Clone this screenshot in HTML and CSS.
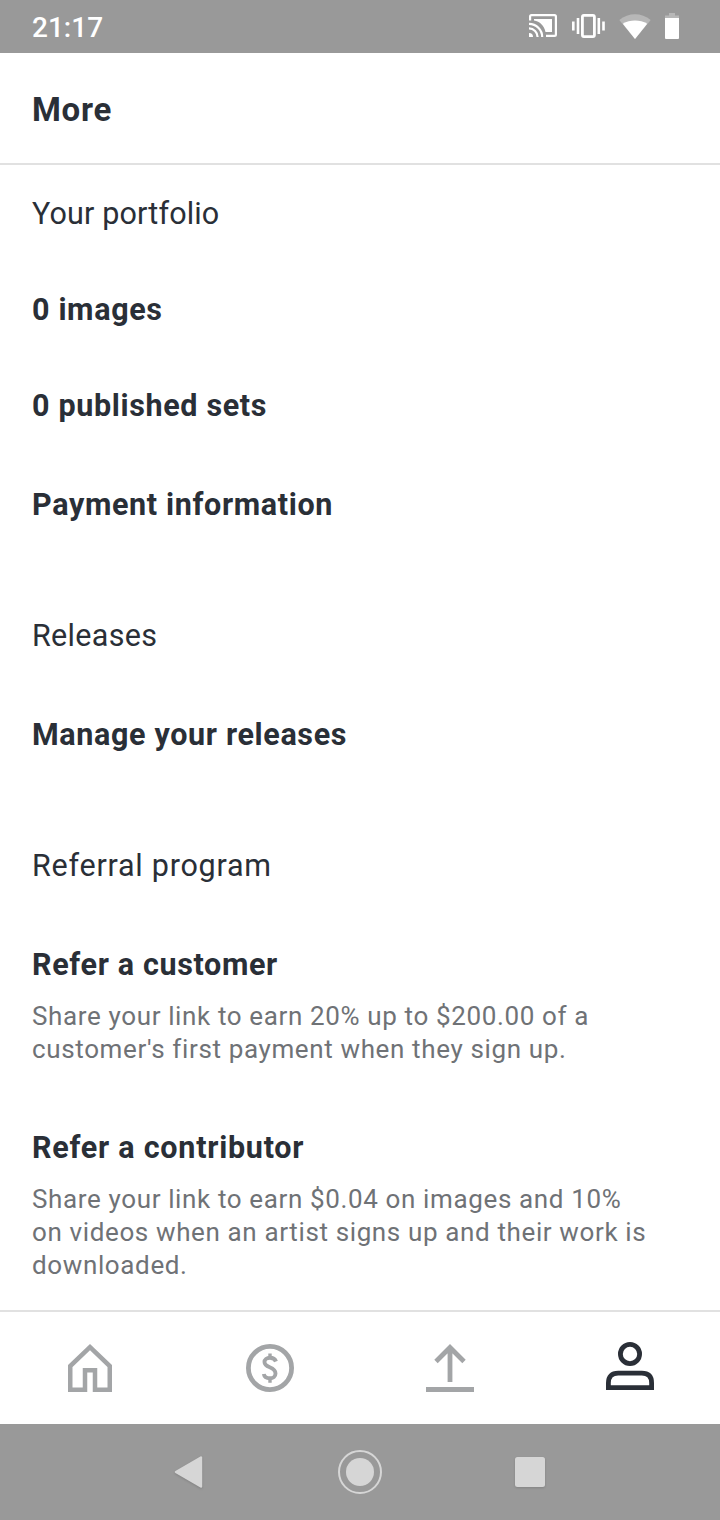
FILE: index.html
```
<!DOCTYPE html>
<html lang="en">
<head>
    <meta charset="UTF-8">
    <meta name="viewport" content="width=device-width, initial-scale=1.0">
    <title>More</title>
    <link rel="stylesheet" href="styles.css">
</head>
<body>

    <!-- Status bar -->
    <div class="status-bar">
        <span class="clock">21:17</span>
        <div class="status-icons">
            <svg class="cast-icon" width="28" height="24" viewBox="0 0 28 24" fill="none" stroke="#fff" stroke-width="2.2">
                <path d="M1.1 6.5V2.5Q1.1 1.1 2.5 1.1H25.5Q26.9 1.1 26.9 2.5V20.5Q26.9 21.9 25.5 21.9H17"/>
                <path d="M5 5H23V18H16.5C15 11.5 11 7.6 5 6.6Z" fill="#fff" stroke="none"/>
                <path d="M0 9.8A13.2 13.2 0 0 1 13.2 23M0 14.4A8.6 8.6 0 0 1 8.6 23"/>
                <path d="M0 19A4 4 0 0 1 4 23H0Z" fill="#fff" stroke="none"/>
            </svg>
            <svg class="vibrate-icon" width="34" height="24" viewBox="0 0 34 24" fill="none" stroke="#fff" stroke-width="2.6">
                <rect x="11.400" y="1.4" width="12" height="21.2" rx="1.5" stroke-width="2.8"/>
                <path d="M7 4V20M27.800 4V20M2.300 7.5V16.5M32.500 7.5V16.5"/>
            </svg>
            <svg class="wifi-icon" width="32" height="25" viewBox="0 0 32 25">
                <path d="M16 25L0.3 6C9.5 -1.6 22.5 -1.6 31.7 6Z" fill="#fff" opacity="0.3"/>
                <path d="M16 25L3.8 9.8C11 5.4 21 5.4 28.2 9.8Z" fill="#fff"/>
            </svg>
            <svg class="battery-icon" width="14" height="26" viewBox="0 0 14 26" fill="#fff">
                <path d="M4 0H10V2.5H14V5H0V2.5H4Z" opacity="0.3"/>
                <path d="M0 5H14V25Q14 26 13 26H1Q0 26 0 25Z"/>
            </svg>
        </div>
    </div>

    <header class="header">
        <h1>More</h1>
    </header>

    <main class="content">
        <section class="portfolio">
            <h2>Your portfolio</h2>
            <a class="item images">0 images</a>
            <a class="item sets">0 published sets</a>
            <a class="item">Payment information</a>
        </section>

        <section class="releases">
            <h2>Releases</h2>
            <a class="item">Manage your releases</a>
        </section>

        <section>
            <h2>Referral program</h2>
            <a class="item">Refer a customer</a>
            <p>Share your link to earn 20% up to $200.00 of a<br>customer's first payment when they sign up.</p>
            <a class="item contributor">Refer a contributor</a>
            <p>Share your link to earn $0.04 on images and 10%<br>on videos when an artist signs up and their work is<br>downloaded.</p>
        </section>
    </main>

    <!-- App tabs -->
    <nav class="tabs">
        <a class="tab">
            <svg width="48" height="48" viewBox="0 0 48 48" fill="none" stroke="#a3a5a7" stroke-width="4.5">
                <path d="M4.25 45.75V22L24 3.2L43.75 22V45.75H29V26.25H19V45.75Z"/>
            </svg>
        </a>
        <a class="tab">
            <svg width="48" height="48" viewBox="0 0 48 48" fill="none" stroke="#a3a5a7">
                <circle cx="24" cy="24" r="21.6" stroke-width="4.8"/>
                <path d="M30 17.5C29 14.8 27 13.7 24 13.7C20.7 13.7 18.5 15.5 18.5 18C18.5 24.5 29.5 22 29.5 29.4C29.5 32.5 27 34.3 24 34.3C20.5 34.3 18.3 32.8 17.8 30" stroke-width="3.9"/>
                <path d="M24 9.5V14M24 34V38.7" stroke-width="3.4"/>
            </svg>
        </a>
        <a class="tab">
            <svg width="48" height="48" viewBox="0 0 48 48" fill="none" stroke="#a3a5a7" stroke-width="4.8">
                <path d="M24 38V4M10 17.5L24 3.5L38 17.5M0 45.5H48"/>
            </svg>
        </a>
        <a class="tab">
            <svg class="profile" width="48" height="48" viewBox="0 0 48 48" fill="none" stroke="#2a2f37" stroke-width="4.8">
                <circle cx="24" cy="12" r="9.6"/>
                <path d="M2.4 45.6V41Q2.4 31.2 12.2 31.2H35.8Q45.6 31.2 45.6 41V45.6Z"/>
            </svg>
        </a>
    </nav>

    <!-- Android navigation -->
    <div class="system-nav">
        <svg class="nav-icon" width="32" height="36" viewBox="0 0 32 36">
            <path d="M2 18L27 3.5V32.5Z" fill="#d6d6d6" stroke="#d6d6d6" stroke-width="2.4" stroke-linejoin="round"/>
        </svg>
        <svg width="44" height="44" viewBox="0 0 44 44">
            <circle cx="22" cy="22" r="21" fill="none" stroke="#d6d6d6" stroke-width="2"/>
            <circle cx="22" cy="22" r="14" fill="#d6d6d6"/>
        </svg>
        <svg class="nav-icon" width="30" height="30" viewBox="0 0 30 30">
            <rect width="30" height="30" rx="2.5" fill="#d6d6d6"/>
        </svg>
    </div>

</body>
</html>
```
FILE: styles.css
```
* {
    margin: 0;
    padding: 0;
    box-sizing: border-box;
}

body {
    width: 720px;
    height: 1520px;
    display: grid;
    grid-template-rows: 53px 112px 1fr 114px 96px;
    background: #fff;
    color: #2a2f37;
    font-family: Roboto, "Liberation Sans", sans-serif;
}

svg {
    display: block;
}

.status-bar {
    padding: 0 41px 0 32px;
    display: flex;
    justify-content: space-between;
    align-items: center;
    background: #999;
    color: #fff;
}

.clock {
    padding-top: 2px;
    font-size: 28px;
    font-weight: 500;
}

.status-icons {
    padding-bottom: 1px;
    display: flex;
    align-items: center;
    gap: 14px;
}

.header {
    padding: 4px 32px 0;
    display: flex;
    align-items: center;
    border-bottom: 2px solid #e1e1e1;
}

h1 {
    font-size: 33px;
    line-height: 40px;
    font-weight: 700;
    letter-spacing: 0.7px;
}

.content {
    padding: 31px 32px 0;
}

section {
    margin-bottom: 95px;
}

section:last-child {
    margin-bottom: 0;
}

h2 {
    font-size: 30.5px;
    line-height: 36px;
    font-weight: 400;
    letter-spacing: 0.75px;
}

.portfolio h2 {
    letter-spacing: 0.15px;
}

.releases h2 {
    letter-spacing: 0.3px;
}

.item {
    display: block;
    margin-top: 63px;
    font-size: 30.5px;
    line-height: 36px;
    font-weight: 700;
    letter-spacing: 0.65px;
}

.images,
.sets {
    margin-top: 60px;
}

.contributor {
    margin-top: 64px;
    letter-spacing: 0.75px;
}

p {
    margin-top: 17px;
    font-size: 26px;
    line-height: 33px;
    letter-spacing: 0.63px;
    color: #6f7276;
    white-space: nowrap;
}

.tabs {
    display: grid;
    grid-template-columns: repeat(4, 1fr);
    place-items: center;
    border-top: 2px solid #e1e1e1;
}

.profile {
    margin-bottom: 4px;
}

.system-nav {
    padding: 0 105px;
    display: grid;
    grid-template-columns: repeat(3, 1fr);
    place-items: center;
    background: #999;
}

.nav-icon {
    filter: drop-shadow(0 1px 1px rgba(0, 0, 0, 0.15));
}
```
